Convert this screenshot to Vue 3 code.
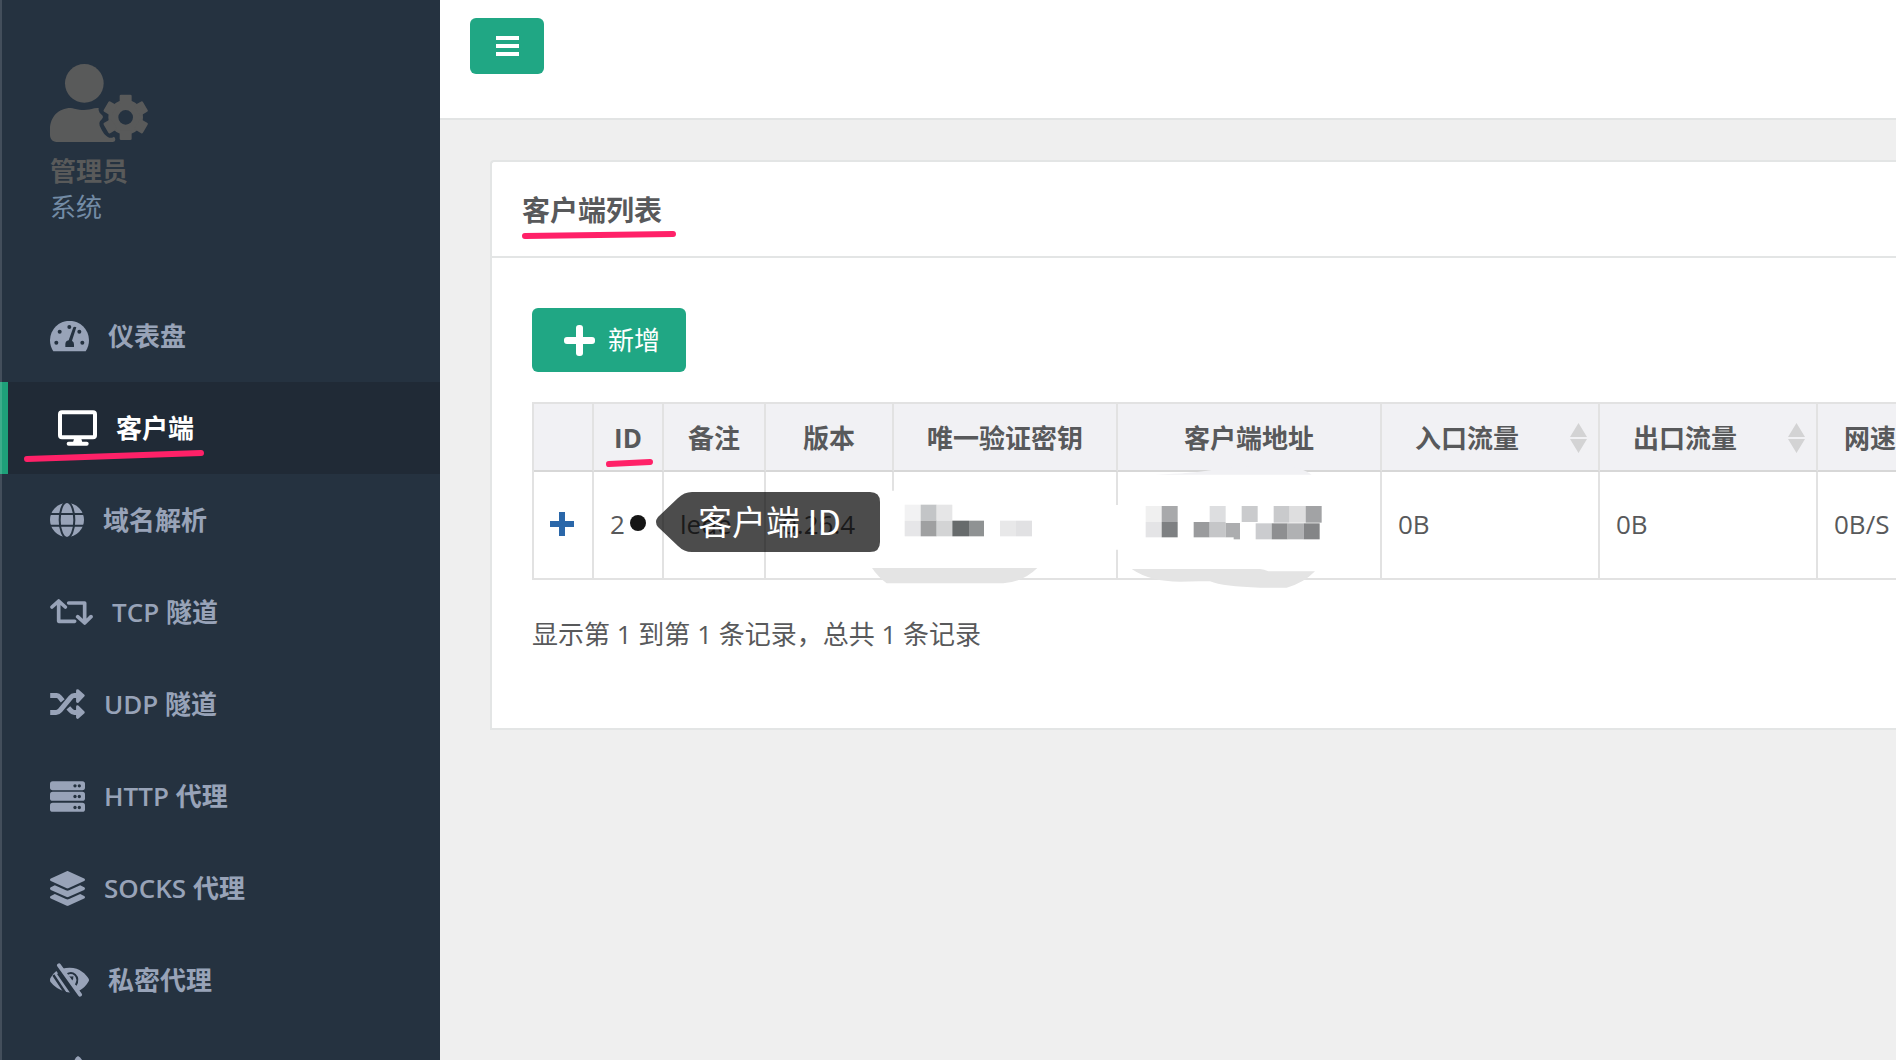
<script setup>
import { ref } from 'vue'

const menu = ref([
  { icon: 'gauge', label: '仪表盘' },
  { icon: 'desktop', label: '客户端', active: true },
  { icon: 'globe', label: '域名解析' },
  { icon: 'retweet', label: 'TCP 隧道' },
  { icon: 'shuffle', label: 'UDP 隧道' },
  { icon: 'server', label: 'HTTP 代理' },
  { icon: 'layers', label: 'SOCKS 代理' },
  { icon: 'eye', label: '私密代理' },
  { icon: 'file', label: '' },
])

// Mosaic tiles covering the private values: x, y, width, height, colour
const tiles = [
  [134, 344, 48, 48, '#f2f2f3'], [182, 344, 48, 48, '#c3c5c7'], [230, 344, 47, 48, '#e6e6e7'],
  [134, 392, 48, 47, '#e6e6e8'], [182, 392, 48, 47, '#9fa0a1'], [230, 392, 47, 47, '#d3d4d5'],
  [277, 392, 50, 47, '#676b6c'], [327, 392, 45, 47, '#8f9293'],
  [420, 392, 48, 47, '#e8e8e9'], [468, 392, 48, 47, '#e1e1e3'],
  [857, 348, 48, 48, '#f0f0f0'], [905, 348, 48, 48, '#a8a9ab'],
  [857, 396, 48, 46, '#e4e4e6'], [905, 396, 48, 46, '#7e8082'],
  [1001, 396, 48, 46, '#9a9b9d'], [1049, 396, 48, 46, '#c5c6c8'], [1097, 399, 43, 43, '#acadaf'], [1121, 440, 19, 8, '#acadaf'],
  [1049, 348, 48, 48, '#dddee0'], [1145, 348, 48, 48, '#cacbcd'],
  [1241, 348, 48, 50, '#c9cacc'], [1289, 348, 48, 50, '#dededf'], [1337, 348, 48, 50, '#a2a3a5'],
  [1187, 400, 48, 48, '#cbcccf'], [1235, 400, 48, 48, '#8e8f91'], [1283, 400, 48, 48, '#b0b1b3'], [1331, 400, 48, 48, '#848587'],
]
</script>

<template>
  <div class="layout">
    <aside class="sidebar">
      <div class="profile">
        <svg class="avatar" width="98" height="78" viewBox="0 0 294 234">
          <circle cx="103" cy="58" r="58" />
          <path d="M0 195C0 160 25 132 62 132q6 0 11 2C95 139 112 139 133 133q6-2 13-1q-2 8 3 14l9 9q3 4-2 10l-6 7q-4 6-1 13C158 205 166 216 178 221q6 2 14-3q4 3 4 9q0 6-7 7H20C7 233 0 224 0 212z" />
          <circle cx="227" cy="160" r="37" fill="none" stroke="currentColor" stroke-width="30" />
          <g transform="translate(227 160)">
            <rect v-for="n in 6" :key="n" x="-18" y="-68" width="36" height="28" rx="4" :transform="`rotate(${n * 60})`" />
          </g>
        </svg>
        <strong class="name">管理员</strong>
        <span class="role">系统</span>
      </div>

      <nav>
        <ul class="menu">
          <li v-for="item in menu" :key="item.icon">
            <a href="#" class="item" :class="{ active: item.active }">
              <svg v-if="item.icon === 'gauge'" width="39" height="31" viewBox="0 0 117 93">
                <path d="M10 91Q0 76 0 58A58 58 0 0 1 117 58Q117 76 107 91z" />
                <g class="cut">
                  <circle cx="29" cy="32" r="6" /><circle cx="58" cy="18" r="6" /><circle cx="88" cy="32" r="6" />
                  <circle cx="19" cy="65" r="6" /><circle cx="97" cy="65" r="6" />
                  <path d="M46 78v-8q0-10 10-12L70 19q4-4 9 0L66 59q7 4 6 12v7z" />
                </g>
              </svg>
              <svg v-else-if="item.icon === 'desktop'" width="39" height="36" viewBox="0 0 117 107">
                <rect class="line" x="6" y="6" width="105" height="75" rx="6" stroke-width="12" />
                <path d="M49 82h20l4 15H45z" />
                <rect x="26" y="95" width="66" height="12" rx="6" />
              </svg>
              <svg v-else-if="item.icon === 'globe'" width="34" height="34" viewBox="0 0 102 102">
                <circle cx="51" cy="51" r="51" />
                <g class="gap" stroke-width="6">
                  <path d="M0 33h102M0 68h102" />
                  <ellipse cx="51" cy="51" rx="22" ry="54" />
                </g>
              </svg>
              <svg v-else-if="item.icon === 'retweet'" width="43" height="26" viewBox="0 0 129 78">
                <g class="line round" stroke-width="11">
                  <path d="M6 24L26 6L46 24M26 8V67H74" />
                  <path d="M56 12H104V70M83 53L104 72L123 53" />
                </g>
                <path d="M14 18L26 4L38 18zM92 60L104 74L116 60z" />
              </svg>
              <svg v-else-if="item.icon === 'shuffle'" width="35" height="30" viewBox="0 0 105 91">
                <path class="line" stroke-width="15" d="M0 20H20Q25 20 29 25L38 36M0 71H18Q25 71 30 65L62 26Q67 20 73 20H82M55 57L62 65Q67 71 73 71H82" />
                <path class="line-fill" d="M83 5L100 20L83 38zM83 54L100 71L83 86z" />
              </svg>
              <svg v-else-if="item.icon === 'server'" width="35" height="31" viewBox="0 0 105 92">
                <rect width="105" height="27" rx="8" />
                <rect y="32" width="105" height="27" rx="8" />
                <rect y="65" width="105" height="27" rx="8" />
                <g class="cut">
                  <circle cx="75" cy="14" r="5" /><circle cx="88" cy="14" r="5" />
                  <circle cx="75" cy="46" r="5" /><circle cx="88" cy="46" r="5" />
                  <circle cx="75" cy="79" r="5" /><circle cx="88" cy="79" r="5" />
                </g>
              </svg>
              <svg v-else-if="item.icon === 'layers'" width="35" height="35" viewBox="0 0 512 512">
                <path d="M12.41 148.02l232.94 105.67c6.8 3.09 14.49 3.09 21.29 0l232.94-105.67c16.55-7.51 16.55-32.52 0-40.03L266.65 2.31a25.607 25.607 0 0 0-21.29 0L12.41 107.98c-16.55 7.51-16.55 32.53 0 40.04zm487.18 88.28l-58.09-26.33-161.64 73.27c-7.56 3.43-15.59 5.17-23.86 5.17s-16.29-1.74-23.86-5.17L70.51 209.97l-58.1 26.33c-16.55 7.5-16.55 32.5 0 40l232.94 105.59c6.8 3.08 14.49 3.08 21.29 0L499.59 276.3c16.55-7.5 16.55-32.5 0-40zm0 127.8l-57.87-26.23-161.86 73.37c-7.56 3.43-15.59 5.17-23.86 5.17s-16.29-1.74-23.86-5.17L70.29 337.87 12.41 364.1c-16.55 7.5-16.55 32.5 0 40l232.94 105.59c6.8 3.08 14.49 3.08 21.29 0L499.59 404.1c16.55-7.5 16.55-32.5 0-40z" />
              </svg>
              <svg v-else-if="item.icon === 'eye'" width="39" height="34" viewBox="0 0 117 102">
                <path d="M1 46Q8 32 19 24L64 88Q56 89 46 86Q16 76 1 56Q-1 51 1 46zM36 17Q48 14 59 14C90 14 108 34 116 47Q118 51 116 55Q106 74 86 84z" />
                <g class="gap">
                  <path stroke-width="7" d="M10 36L46 90M24 31L66 92" />
                  <path stroke-width="6" d="M50 34Q64 25 75 35Q88 48 77 67" />
                </g>
                <path class="cut" d="M57 38q8 5 13 1q1 10-4 14z" />
                <path class="line round" stroke-width="12" d="M27 7L90 95" />
              </svg>
              <svg v-else width="54" height="32" viewBox="0 0 54 32">
                <path d="M28 0Q31 1 33 6L44 14V32H10V14L24 6Q25 1 28 0z" />
              </svg>
              <span v-if="item.label">{{ item.label }}</span>
              <svg v-if="item.active" class="mark mark-nav" width="184" height="16" viewBox="0 0 184 16">
                <path d="M5 11L179 5" />
              </svg>
            </a>
          </li>
        </ul>
      </nav>
    </aside>

    <main class="main">
      <header class="topbar">
        <button class="toggle" type="button">
          <svg width="23" height="20" viewBox="0 0 23 20"><path d="M0 0h23v4H0zM0 8h23v4H0zM0 16h23v4H0z" /></svg>
        </button>
      </header>

      <section class="card">
        <div class="card-head">
          <h1>客户端列表
            <svg class="mark mark-title" width="160" height="14" viewBox="0 0 160 14"><path d="M6 8L154 6" /></svg>
          </h1>
        </div>
        <div class="card-body">
          <button class="add" type="button">
            <svg width="31" height="31" viewBox="0 0 31 31">
              <rect y="12" width="31" height="7" rx="3" /><rect x="12" width="7" height="31" rx="3" />
            </svg>
            <span>新增</span>
          </button>

          <table>
            <colgroup>
              <col class="c-toggle"><col class="c-id"><col class="c-note"><col class="c-ver"><col class="c-key">
              <col class="c-addr"><col class="c-flow"><col class="c-flow"><col>
            </colgroup>
            <thead>
              <tr>
                <th></th>
                <th class="anchor">ID
                  <svg class="mark mark-id" width="50" height="14" viewBox="0 0 50 14"><path d="M5 8L46 6" /></svg>
                </th>
                <th>备注</th>
                <th>版本</th>
                <th>唯一验证密钥</th>
                <th>客户端地址</th>
                <th v-for="name in ['入口流量', '出口流量']" :key="name">
                  <button class="sort" type="button">
                    <span>{{ name }}</span>
                    <svg width="17" height="30" viewBox="0 0 34 60"><path d="M17 0L34 28H0zM0 32H34L17 60z" /></svg>
                  </button>
                </th>
                <th class="speed">网速</th>
              </tr>
            </thead>
            <tbody>
              <tr>
                <td>
                  <a class="expand" href="#"><svg width="24" height="24" viewBox="0 0 24 24"><path d="M9 0h6v9h9v6h-9v9H9v-9H0V9h9z" /></svg></a>
                </td>
                <td class="anchor">2
                  <span class="tip">
                    <svg width="252" height="60" viewBox="0 0 252 60">
                      <circle cx="10" cy="31" r="8" fill="#151515" />
                      <path d="M30 35Q26 30 30 25L50 6Q56 0 64 0H242Q252 0 252 10V50Q252 60 242 60H64Q56 60 50 54z" fill="#000" fill-opacity=".7" />
                    </svg>
                    <span class="tip-text">客户端 ID</span>
                  </span>
                </td>
                <td>lede</td>
                <td>0.26.4</td>
                <td class="anchor">
                  <svg class="mosaic" width="520" height="140" viewBox="0 210 1560 420">
                    <path fill="#fff" d="M90 302h16v240H90zM764 345h14v134h-14z" />
                    <path fill="#f1f1f4" d="M885 254Q1000 250 1055 240Q1110 230 1200 228H1290Q1330 236 1355 254z" />
                    <path fill="#e4e4e4" d="M36 534H532Q490 575 430 580H80Q55 562 36 534z" />
                    <path fill="#e4e4e4" d="M815 537H1200Q1212 538 1225 544H1365Q1330 580 1280 593H1200Q1090 590 1050 574Q1000 573 960 575Q870 575 815 537z" />
                    <rect v-for="(t, i) in tiles" :key="i" :x="t[0]" :y="t[1]" :width="t[2]" :height="t[3]" :fill="t[4]" />
                  </svg>
                </td>
                <td></td>
                <td>0B</td>
                <td>0B</td>
                <td>0B/S</td>
              </tr>
            </tbody>
          </table>
          <p class="summary">显示第 1 到第 1 条记录，总共 1 条记录</p>
        </div>
      </section>
    </main>
  </div>
</template>

<style>
body {
  margin: 0;
  background: #efefef;
}
</style>

<style scoped>
.layout {
  display: flex;
  height: 100vh;
  overflow: hidden;
  font-family: "Open Sans", "Noto Sans CJK SC", sans-serif;
  font-size: 26px;
  line-height: 36px;
  color: #58595b;
  background: #efefef;
}
svg {
  display: block;
  flex: none;
  fill: currentColor;
}
button {
  border: 0;
  font: inherit;
  cursor: pointer;
}

/* Sidebar */
.sidebar {
  position: relative;
  flex: none;
  width: 440px;
  overflow: hidden;
  background: #253240;
}
.sidebar::before {
  content: "";
  position: absolute;
  z-index: 1;
  inset: 0 auto 0 0;
  width: 2px;
  background: rgba(255, 255, 255, 0.14);
}
.profile {
  display: flex;
  flex-direction: column;
  box-sizing: border-box;
  height: 290px;
  padding: 64px 50px 0;
}
.avatar {
  margin-bottom: 11px;
  color: #595a5a;
}
.name {
  color: #595a5a;
}
.role {
  color: #738ba5;
}
.menu {
  margin: 0;
  padding: 0;
  list-style: none;
}
.item {
  position: relative;
  display: flex;
  align-items: center;
  gap: 19px;
  height: 92px;
  padding-left: 50px;
  color: #98a3b8;
  font-weight: 600;
  text-decoration: none;
}
.item.active {
  border-left: 8px solid #1ea079;
  background: #202a36;
  color: #fff;
}
.cut {
  fill: #253240;
}
.gap {
  fill: none;
  stroke: #253240;
}
.line {
  fill: none;
  stroke: currentColor;
}
.round {
  stroke-linecap: round;
  stroke-linejoin: round;
}
.line-fill {
  stroke: currentColor;
  stroke-width: 9;
  stroke-linejoin: round;
}

/* Hand-drawn underlines */
.mark {
  position: absolute;
  fill: none;
  stroke: #ff2168;
  stroke-width: 6;
  stroke-linecap: round;
}
.mark-nav {
  left: 14px;
  bottom: 10px;
}
.mark-title {
  left: -3px;
  bottom: -14px;
}
.mark-id {
  left: 10px;
  bottom: 0;
}

/* Main area */
.main {
  flex: 1;
  min-width: 0;
  overflow: hidden;
}
.topbar {
  box-sizing: border-box;
  height: 120px;
  padding: 18px 30px;
  border-bottom: 2px solid #e2e4e4;
  background: #fff;
}
.toggle {
  display: flex;
  align-items: center;
  justify-content: center;
  width: 74px;
  height: 56px;
  border-radius: 6px;
  background: #20a784;
  color: #fff;
}
.card {
  margin: 40px 0 0 50px;
  border: 2px solid #e3e5e5;
  border-right: 0;
  border-radius: 4px 0 0 0;
  background: #fff;
}
.card-head {
  display: flex;
  padding: 30px 30px 28px;
  border-bottom: 2px solid #e3e5e5;
}
h1 {
  position: relative;
  margin: 0;
  font-size: 28px;
  line-height: 36px;
  font-weight: 700;
}
.card-body {
  padding: 50px 0 76px 40px;
}
.add {
  display: flex;
  align-items: center;
  gap: 13px;
  height: 64px;
  padding: 0 26px 0 32px;
  border-radius: 6px;
  background: #20a784;
  color: #fff;
}
table {
  width: 100%;
  margin: 30px 0 36px;
  table-layout: fixed;
  border: 2px solid #e2e2e2;
  border-width: 2px 0 0 2px;
  border-spacing: 0;
}
.c-toggle { width: 60px; }
.c-id { width: 70px; }
.c-note { width: 102px; }
.c-ver { width: 128px; }
.c-key { width: 224px; }
.c-addr { width: 264px; }
.c-flow { width: 218px; }
th,
td {
  box-sizing: border-box;
  padding: 0 0 0 16px;
  border-right: 2px solid #e2e2e2;
  border-bottom: 2px solid #e2e2e2;
  text-align: left;
  white-space: nowrap;
}
th:last-child,
td:last-child {
  border-right: 0;
}
th {
  height: 68px;
  padding: 2px 0 0;
  border-bottom-color: #d7d7d7;
  background: #f1f1f4;
  font-weight: 700;
  text-align: center;
}
td {
  height: 108px;
  padding-bottom: 2px;
}
.anchor {
  position: relative;
}
.sort {
  display: flex;
  align-items: center;
  width: 100%;
  padding: 0 11px 0 0;
  background: none;
  color: inherit;
}
.sort span {
  flex: 1;
  padding-right: 18px;
}
.sort svg {
  color: #d3d3d4;
}
th.speed {
  padding-left: 26px;
  text-align: left;
}
.expand {
  color: #2a67a9;
}
.mosaic {
  position: absolute;
  left: -34px;
  top: -12px;
}

/* Callout over the row */
.tip {
  position: absolute;
  z-index: 2;
  left: 34px;
  top: 20px;
}
.tip-text {
  position: absolute;
  left: 70px;
  top: 0;
  color: #fff;
  font-family: "Noto Sans CJK SC", sans-serif;
  font-size: 34px;
  line-height: 58px;
}
.summary {
  margin: 0;
}
</style>
